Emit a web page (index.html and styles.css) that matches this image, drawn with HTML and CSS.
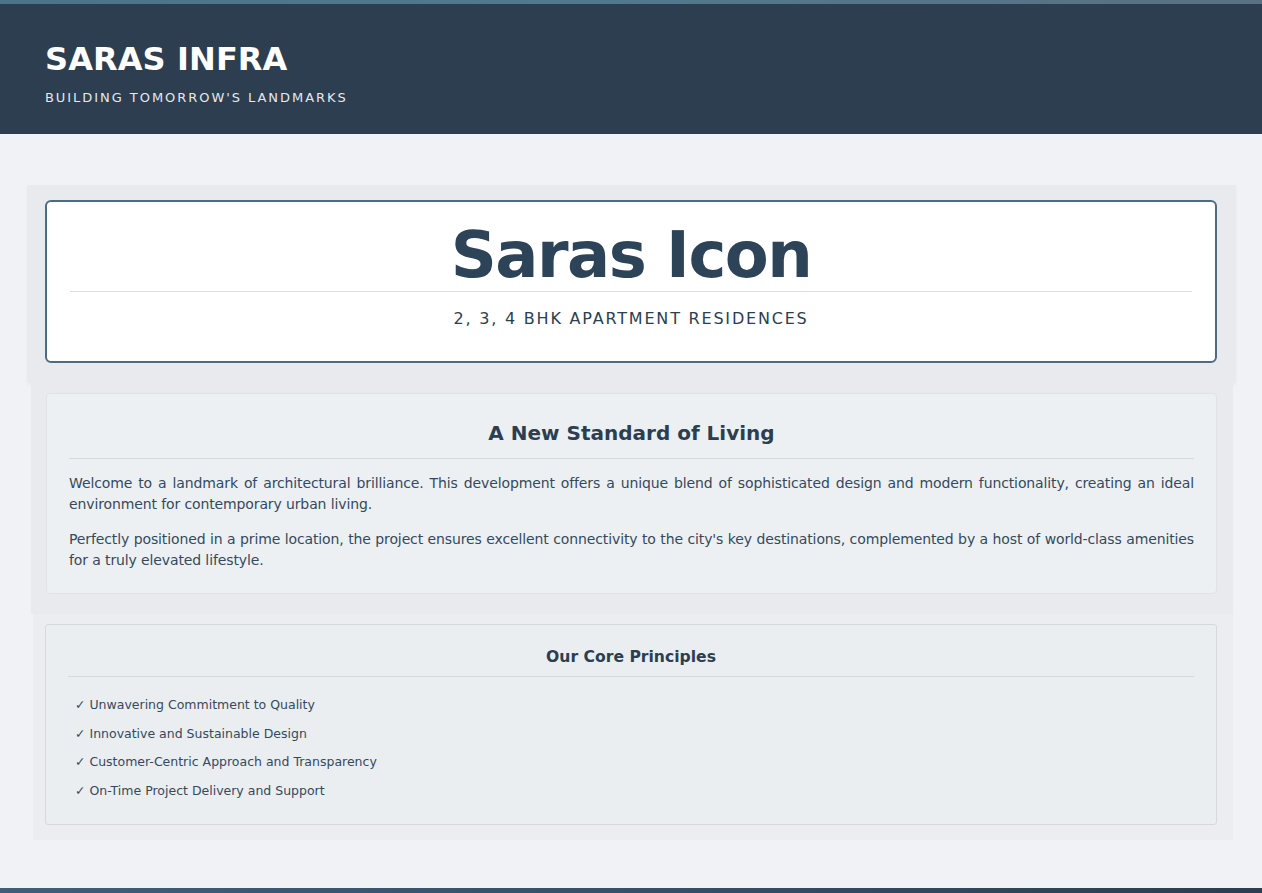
FILE: index.html
```html
<!DOCTYPE html>
<html lang="en">
<head>
<meta charset="utf-8">
<title>Saras Infra - Saras Icon</title>
<link rel="stylesheet" href="styles.css">
</head>
<body>
<div class="topbar"></div>
<header class="site-header">
  <h1 class="brand">SARAS INFRA</h1>
  <p class="tagline">Building Tomorrow's Landmarks</p>
</header>
<main class="main">
  <section class="wrap wrap-hero">
    <div class="hero-card">
      <h2 class="hero-title">Saras Icon</h2>
      <p class="hero-sub">2, 3, 4 BHK Apartment Residences</p>
    </div>
  </section>
  <section class="wrap wrap-intro">
    <div class="card">
      <h3 class="card-title">A New Standard of Living</h3>
      <p class="card-text">Welcome to a landmark of architectural brilliance. This development offers a unique blend of sophisticated design and modern functionality, creating an ideal environment for contemporary urban living.</p>
      <p class="card-text">Perfectly positioned in a prime location, the project ensures excellent connectivity to the city's key destinations, complemented by a host of world-class amenities for a truly elevated lifestyle.</p>
    </div>
  </section>
  <section class="wrap wrap-principles">
    <div class="card card-principles">
      <h3 class="card-title small">Our Core Principles</h3>
      <ul class="principles">
        <li>✓ Unwavering Commitment to Quality</li>
        <li>✓ Innovative and Sustainable Design</li>
        <li>✓ Customer-Centric Approach and Transparency</li>
        <li>✓ On-Time Project Delivery and Support</li>
      </ul>
    </div>
  </section>
</main>
<footer class="site-footer"></footer>
</body>
</html>
```
FILE: styles.css
```css
* { box-sizing: border-box; }
html, body { margin: 0; padding: 0; }
body {
  background: #f0f2f5;
  font-family: "DejaVu Sans", Verdana, sans-serif;
  color: #34495e;
}
.topbar {
  height: 4px;
  background: linear-gradient(90deg, #4a7488 0%, #4f7a8e 40%, #5a7184 100%);
}
.site-header {
  background: #2c3e50;
  padding: 37px 45px 29px;
  color: #fff;
}
.brand {
  margin: 0;
  font-size: 32px;
  font-weight: bold;
  letter-spacing: 0.1px;
  line-height: 37px;
}
.tagline {
  margin: 12px 0 0;
  font-size: 13px;
  line-height: 15px;
  letter-spacing: 1.95px;
  text-transform: uppercase;
  color: #e4e9ee;
}
.main {
  padding-top: 51px;
  padding-bottom: 48px;
}
.wrap {
  background: #e8eaed;
}
.wrap-hero {
  margin: 0 26px 0 27px;
  padding: 15px 19px 20px 18px;
  box-shadow: 0 2px 4px rgba(0,0,0,0.03);
}
.hero-card {
  background: #fff;
  border: 2px solid #4e6b84;
  border-radius: 6px;
  padding: 17px 23px 33px;
  text-align: center;
}
.hero-title {
  margin: 0;
  font-size: 64px;
  line-height: 72px;
  font-weight: bold;
  letter-spacing: -1.5px;
  color: #2d4358;
  border-bottom: 1px solid #dcdfe2;
}
.hero-sub {
  margin: 17px 0 0;
  font-size: 16px;
  line-height: 19px;
  letter-spacing: 1.8px;
  text-transform: uppercase;
  color: #2c3e50;
}
.wrap-intro {
  margin: 0 29px 0 31px;
  padding: 10px 16px 20px 15px;
  background: #e8eaed;
}
.card {
  background: #edf0f2;
  border: 1px solid #dfe3e6;
  border-radius: 4px;
  padding: 22px 22px 22px;
}
.card-title {
  margin: 6px 0 0;
  padding-bottom: 13px;
  font-size: 20px;
  line-height: 23px;
  font-weight: bold;
  text-align: center;
  color: #2c3e50;
  border-bottom: 1px solid #d6dade;
}
.card-text {
  margin: 14px 0 0;
  font-size: 14px;
  line-height: 21px;
  letter-spacing: -0.12px;
  text-align: justify;
  color: #34495e;
}
.wrap-principles {
  margin: 0 29px 0 33px;
  padding: 10px 16px 15px 12px;
  background: #ecedf1;
}
.card-principles {
  background: #ebeef0;
  border: 1px solid #d5d9dc;
  border-radius: 3px;
  padding: 22px 22px 18px;
}
.card-title.small {
  margin-top: 1px;
  font-size: 15.6px;
  line-height: 19px;
  padding-bottom: 9px;
}
.principles {
  list-style: none;
  margin: 14px 0 0;
  padding: 0 0 0 7px;
}
.principles li {
  font-size: 12.5px;
  line-height: 20.67px;
  padding: 4px 0;
  color: #34495e;
}
.site-footer {
  height: 40px;
  background: linear-gradient(90deg, #3d5f7a 0%, #34506a 50%, #2c3e50 100%);
}
```
